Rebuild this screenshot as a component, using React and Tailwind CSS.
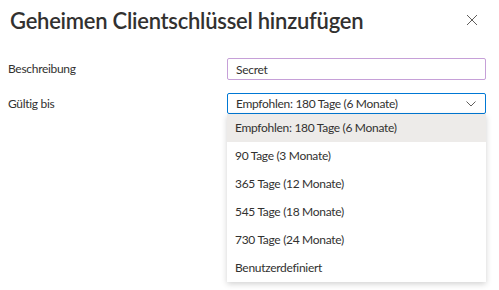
import { useState } from 'react';

const options = [
  'Empfohlen: 180 Tage (6 Monate)',
  '90 Tage (3 Monate)',
  '365 Tage (12 Monate)',
  '545 Tage (18 Monate)',
  '730 Tage (24 Monate)',
  'Benutzerdefiniert',
];

function App() {
  const [selected, setSelected] = useState(0);
  const [open, setOpen] = useState(true);

  return (
    <div className="w-[499px] h-[290px] bg-white text-[#323130] font-['Lato',sans-serif] overflow-hidden">
      <header className="flex items-center justify-between h-[40px] pl-[10px] pr-[21px]">
        <h1 className="text-[22px] font-semibold tracking-[-0.25px]">Geheimen Clientschlüssel hinzufügen</h1>
        <button className="w-[12px] h-[12px] text-[#605e5c]">
          <svg viewBox="0 0 12 12" width="12" height="12" fill="none" stroke="currentColor" strokeWidth="1">
            <path d="M1 1 L11 11 M11 1 L1 11" />
          </svg>
        </button>
      </header>

      <form className="mt-[18px] flex flex-col gap-[13px] text-[12px] tracking-[-0.3px]">
        <div className="flex items-center">
          <label className="w-[227px] pl-[8px]">Beschreibung</label>
          <input
            defaultValue="Secret"
            className="w-[259px] h-[22px] px-[8px] border border-[#c6a0d8] rounded-[2px] outline-none"
          />
        </div>
        <div className="flex items-center">
          <label className="w-[227px] pl-[8px]">Gültig bis</label>
          <div className="relative w-[259px]">
            <button
              type="button"
              onClick={() => setOpen(!open)}
              className="w-full h-[21px] flex items-center justify-between pl-[8px] pr-[9px] border border-[#0078d4] rounded-[2px] text-left"
            >
              <span>{options[selected]}</span>
              <svg viewBox="0 0 10 6" width="10" height="6" fill="none" stroke="#605e5c" strokeWidth="1">
                <path d="M0.5 0.5 L5 5 L9.5 0.5" />
              </svg>
            </button>
            {open && (
              <ul className="absolute left-0 top-[21px] w-full bg-white shadow-[0_2px_6px_rgba(0,0,0,0.18)]">
                {options.map((opt, i) => (
                  <li
                    key={opt}
                    onClick={() => { setSelected(i); setOpen(false); }}
                    className={`h-[28px] flex items-center pl-[8px] ${i === selected ? 'bg-[#edebe9]' : 'bg-white'}`}
                  >
                    {opt}
                  </li>
                ))}
              </ul>
            )}
          </div>
        </div>
      </form>
    </div>
  );
}

export default App;
